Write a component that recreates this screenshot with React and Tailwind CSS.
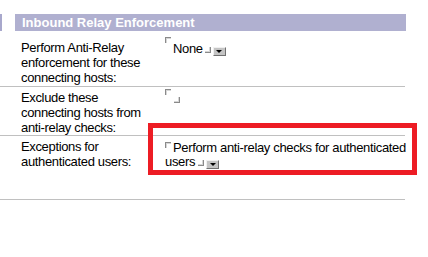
const CornerOpen = ({ className = "" }) => (
  <span
    className={`w-[6px] h-[6px] border-l border-t border-[#8a8a8a] shadow-[inset_1px_1px_0_#d6d6d6] ${className}`}
  />
);

const CornerClose = ({ className = "" }) => (
  <span
    className={`w-[6px] h-[6px] border-r border-b border-[#8a8a8a] shadow-[inset_-1px_-1px_0_#d6d6d6] ${className}`}
  />
);

const DropButton = () => (
  <span className="inline-flex items-center justify-center w-[13px] h-[9px] ml-[2px] bg-[#c4c4c4] border-t border-l border-[#f0f0f0] border-r border-b border-r-[#707070] border-b-[#707070] align-baseline">
    <span className="w-0 h-0 border-l-[3px] border-r-[3px] border-t-[3px] border-l-transparent border-r-transparent border-t-black" />
  </span>
);

const Row = ({ label, children, className }) => (
  <div className={`flex w-[405px] border-b border-[#c0c0c0] ${className}`}>
    <div className="w-[165px] shrink-0 pl-[21px]">
      <div className="w-[126px] leading-[15px]">{label}</div>
    </div>
    <div className="flex-1 min-w-0">{children}</div>
  </div>
);

export default function App() {
  return (
    <div className="relative w-[428px] h-[257px] bg-white overflow-hidden text-[13px] tracking-[-0.35px] text-black font-['Liberation_Sans',Arial,sans-serif]">
      <div className="flex pt-[14px]">
        <div className="w-[2px] h-[17px] bg-[#a8a8cc]" />
        <div className="ml-[13px] w-[391px] h-[17px] bg-[#b0b0d0] pl-[7px] leading-[17px] tracking-normal font-bold text-white">
          Inbound Relay Enforcement
        </div>
      </div>

      <Row label="Perform Anti-Relay enforcement for these connecting hosts:" className="h-[56px] pt-[9px]">
        <div className="pt-[1px] leading-[15px]">
          <CornerOpen className="inline-block align-top -mt-[4px]" />
          <span className="ml-[2px]">None</span>
          <CornerClose className="inline-block ml-[2px] align-baseline" />
          <DropButton />
        </div>
      </Row>

      <Row label="Exclude these connecting hosts from anti-relay checks:" className="h-[49px] pt-[3px]">
        <div className="flex flex-col -mt-[1px]">
          <CornerOpen className="block" />
          <CornerClose className="block ml-[9px] mt-[2px]" />
        </div>
      </Row>

      <Row label="Exceptions for authenticated users:" className="h-[64px] pt-[3px]">
        <div className="w-[250px] pt-[2px] leading-[14px]">
          <CornerOpen className="inline-block align-top mt-[1px]" />
          <span className="ml-[2px]">Perform anti-relay checks for authenticated users</span>
          <CornerClose className="inline-block ml-[3px] align-baseline" />
          <DropButton />
        </div>
      </Row>

      <div className="absolute left-[148px] top-[123px] w-[269px] h-[52px] border-[5px] border-[#ed1c24]" />
    </div>
  );
}
